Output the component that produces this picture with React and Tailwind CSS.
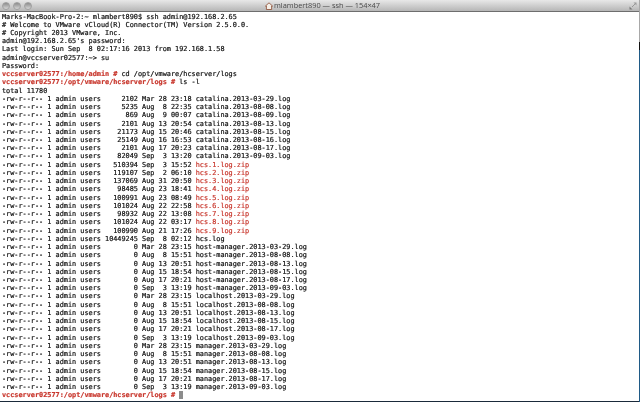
const R = "text-[#c8372d]";
const head = [
  "Marks-MacBook-Pro-2:~ mlambert890$ ssh admin@192.168.2.65",
  "# Welcome to VMware vCloud(R) Connector(TM) Version 2.5.0.0.",
  "# Copyright 2013 VMware, Inc.",
  "admin@192.168.2.65's password:",
  "Last login: Sun Sep  8 02:17:16 2013 from 192.168.1.58",
  "admin@vccserver02577:~> su",
  "Password:",
];
const files = [
  ["2102 Mar 28 23:18", "catalina.2013-03-29.log"],
  ["5235 Aug  8 22:35", "catalina.2013-08-08.log"],
  ["869 Aug  9 00:07", "catalina.2013-08-09.log"],
  ["2101 Aug 13 20:54", "catalina.2013-08-13.log"],
  ["21173 Aug 15 20:46", "catalina.2013-08-15.log"],
  ["25149 Aug 16 16:53", "catalina.2013-08-16.log"],
  ["2101 Aug 17 20:23", "catalina.2013-08-17.log"],
  ["82049 Sep  3 13:20", "catalina.2013-09-03.log"],
  ["510394 Sep  3 15:52", "hcs.1.log.zip", 1],
  ["119107 Sep  2 06:10", "hcs.2.log.zip", 1],
  ["137069 Aug 31 20:50", "hcs.3.log.zip", 1],
  ["98485 Aug 23 18:41", "hcs.4.log.zip", 1],
  ["100991 Aug 23 08:49", "hcs.5.log.zip", 1],
  ["101024 Aug 22 22:58", "hcs.6.log.zip", 1],
  ["98932 Aug 22 13:08", "hcs.7.log.zip", 1],
  ["101024 Aug 22 03:17", "hcs.8.log.zip", 1],
  ["100990 Aug 21 17:26", "hcs.9.log.zip", 1],
  ["10449245 Sep  8 02:12", "hcs.log"],
  ["0 Mar 28 23:15", "host-manager.2013-03-29.log"],
  ["0 Aug  8 15:51", "host-manager.2013-08-08.log"],
  ["0 Aug 13 20:51", "host-manager.2013-08-13.log"],
  ["0 Aug 15 18:54", "host-manager.2013-08-15.log"],
  ["0 Aug 17 20:21", "host-manager.2013-08-17.log"],
  ["0 Sep  3 13:19", "host-manager.2013-09-03.log"],
  ["0 Mar 28 23:15", "localhost.2013-03-29.log"],
  ["0 Aug  8 15:51", "localhost.2013-08-08.log"],
  ["0 Aug 13 20:51", "localhost.2013-08-13.log"],
  ["0 Aug 15 18:54", "localhost.2013-08-15.log"],
  ["0 Aug 17 20:21", "localhost.2013-08-17.log"],
  ["0 Sep  3 13:19", "localhost.2013-09-03.log"],
  ["0 Mar 28 23:15", "manager.2013-03-29.log"],
  ["0 Aug  8 15:51", "manager.2013-08-08.log"],
  ["0 Aug 13 20:51", "manager.2013-08-13.log"],
  ["0 Aug 15 18:54", "manager.2013-08-15.log"],
  ["0 Aug 17 20:21", "manager.2013-08-17.log"],
  ["0 Sep  3 13:19", "manager.2013-09-03.log"],
];
const row = (s) => "-rw-r--r-- 1 admin users " + s.padStart(21, " ") + " ";

function Light() {
  return <span className="w-[8px] h-[8px] rounded-full bg-gradient-to-b from-[#8c8c8c] to-[#d8d8d8] border border-[#a0a0a0]" />;
}

export default function App() {
  return (
    <div className="w-[640px] h-[402px] overflow-hidden bg-[#1a2a3a] flex">
      <div className="w-[639px] h-[401px] bg-white flex flex-col">
        <div className="h-[12px] shrink-0 flex items-center relative bg-gradient-to-b from-[#e8e8e8] to-[#b6b6b6] border-b border-[#6e6e6e]">
          <div className="flex gap-[3px] pl-[2px] items-center blur-[0.3px]">
            <Light /><Light /><Light />
          </div>
          <div className="absolute left-[265px] top-0 h-full flex items-center gap-[1px] text-[#4a4a4a] text-[7.4px] font-['Open_Sans','Liberation_Sans',sans-serif] whitespace-pre blur-[0.2px]">
            <svg width="8" height="8" viewBox="0 0 8 8">
              <path d="M0.5 4 L4 0.8 L7.5 4 L6.6 4 L6.6 7.5 L1.4 7.5 L1.4 4 Z" fill="#f4efe8" stroke="#8a4a30" strokeWidth="0.8" />
            </svg>
            <span>mlambert890 — ssh — 154×47</span>
          </div>
          <svg className="absolute right-[2px] top-[2px] blur-[0.3px]" width="8" height="8" viewBox="0 0 8 8">
            <path d="M4.5 0.5 H7.5 V3.5 Z" fill="#9a9a9a" />
            <path d="M0.5 4.5 V7.5 H3.5 Z" fill="#7a7a7a" />
            <path d="M3 5 L6 2" stroke="#8a8a8a" strokeWidth="0.8" />
          </svg>
        </div>
        <pre className="m-0 pl-[2px] pt-[0.5px] font-['DejaVu_Sans_Mono','Liberation_Mono',monospace] text-[6.85px] leading-[8.23px] text-[#111111] [-webkit-text-stroke-width:0.2px] blur-[0.25px]">
          {head.map((l) => <div key={l}>{l}</div>)}
          <div><span className={R + " font-bold"}>vccserver02577:/home/admin #</span> cd /opt/vmware/hcserver/logs</div>
          <div><span className={R + " font-bold"}>vccserver02577:/opt/vmware/hcserver/logs #</span> ls -l</div>
          <div>total 11780</div>
          {files.map(([m, n, red]) => (
            <div key={n}>{row(m)}<span className={red ? R : ""}>{n}</span></div>
          ))}
          <div className="flex items-center">
            <span className={R + " font-bold"}>vccserver02577:/opt/vmware/hcserver/logs #&nbsp;</span>
            <span className="w-[4px] h-[8px] bg-[#8c8c8c]" />
          </div>
        </pre>
      </div>
      <div className="w-[1px] h-full flex flex-col">
        <div className="h-[42px] bg-[#a8a8a8]" />
        <div className="h-[8px] bg-[#111111]" />
        <div className="flex-1 bg-[#1f5a86]" />
      </div>
    </div>
  );
}
